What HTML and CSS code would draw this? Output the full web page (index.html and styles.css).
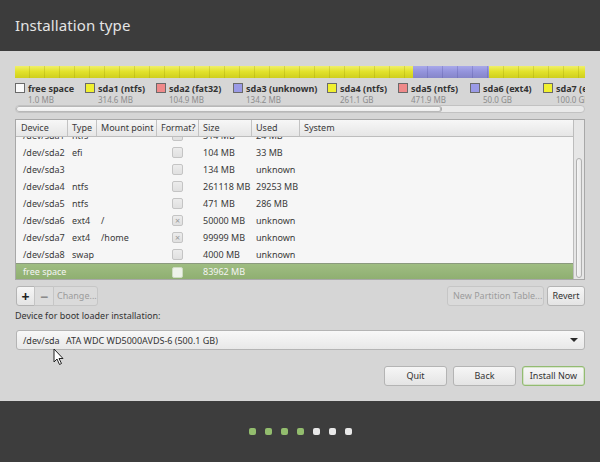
FILE: index.html
```html
<!DOCTYPE html>
<html>
<head>
<meta charset="utf-8">
<link rel="stylesheet" href="styles.css">
</head>
<body>
<div class="page">
  <header class="header"><h1 class="title">Installation type</h1></header>
  <main class="main">
    <div class="diskbar">
      <div class="seg seg-yellow" style="width:398px"></div>
      <div class="seg seg-blue" style="width:76px"></div>
      <div class="seg seg-yellow seg-fill"></div>
    </div>
    <div class="legend">
      <div class="leg"><span class="box box-free"></span><div class="leg-text"><div class="leg-name">free space</div><div class="leg-size">1.0 MB</div></div></div>
      <div class="leg"><span class="box box-yellow"></span><div class="leg-text"><div class="leg-name">sda1 (ntfs)</div><div class="leg-size">314.6 MB</div></div></div>
      <div class="leg"><span class="box box-red"></span><div class="leg-text"><div class="leg-name">sda2 (fat32)</div><div class="leg-size">104.9 MB</div></div></div>
      <div class="leg"><span class="box box-blue"></span><div class="leg-text"><div class="leg-name">sda3 (unknown)</div><div class="leg-size">134.2 MB</div></div></div>
      <div class="leg"><span class="box box-yellow"></span><div class="leg-text"><div class="leg-name">sda4 (ntfs)</div><div class="leg-size">261.1 GB</div></div></div>
      <div class="leg"><span class="box box-red"></span><div class="leg-text"><div class="leg-name">sda5 (ntfs)</div><div class="leg-size">471.9 MB</div></div></div>
      <div class="leg"><span class="box box-blue"></span><div class="leg-text"><div class="leg-name">sda6 (ext4)</div><div class="leg-size">50.0 GB</div></div></div>
      <div class="leg"><span class="box box-yellow"></span><div class="leg-text"><div class="leg-name">sda7 (ext4)</div><div class="leg-size">100.0 GB</div></div></div>
    </div>
    <div class="hscroll"><div class="hthumb"></div></div>

    <div class="table">
      <div class="table-main">
        <div class="thead">
          <div class="th">Device</div>
          <div class="th">Type</div>
          <div class="th">Mount point</div>
          <div class="th">Format?</div>
          <div class="th">Size</div>
          <div class="th">Used</div>
          <div class="th th-last">System</div>
        </div>
        <div class="tbody">
          <div class="rows">
            <div class="row"><div class="td td-dev">/dev/sda1</div><div class="td">ntfs</div><div class="td"></div><div class="td td-chk"><span class="chk"></span></div><div class="td">314 MB</div><div class="td">24 MB</div><div class="td"></div></div>
            <div class="row"><div class="td td-dev">/dev/sda2</div><div class="td">efi</div><div class="td"></div><div class="td td-chk"><span class="chk"></span></div><div class="td">104 MB</div><div class="td">33 MB</div><div class="td"></div></div>
            <div class="row"><div class="td td-dev">/dev/sda3</div><div class="td"></div><div class="td"></div><div class="td td-chk"><span class="chk"></span></div><div class="td">134 MB</div><div class="td">unknown</div><div class="td"></div></div>
            <div class="row"><div class="td td-dev">/dev/sda4</div><div class="td">ntfs</div><div class="td"></div><div class="td td-chk"><span class="chk"></span></div><div class="td">261118 MB</div><div class="td">29253 MB</div><div class="td"></div></div>
            <div class="row"><div class="td td-dev">/dev/sda5</div><div class="td">ntfs</div><div class="td"></div><div class="td td-chk"><span class="chk"></span></div><div class="td">471 MB</div><div class="td">286 MB</div><div class="td"></div></div>
            <div class="row"><div class="td td-dev">/dev/sda6</div><div class="td">ext4</div><div class="td">/</div><div class="td td-chk"><span class="chk chk-on">×</span></div><div class="td">50000 MB</div><div class="td">unknown</div><div class="td"></div></div>
            <div class="row"><div class="td td-dev">/dev/sda7</div><div class="td">ext4</div><div class="td">/home</div><div class="td td-chk"><span class="chk chk-on">×</span></div><div class="td">99999 MB</div><div class="td">unknown</div><div class="td"></div></div>
            <div class="row"><div class="td td-dev">/dev/sda8</div><div class="td">swap</div><div class="td"></div><div class="td td-chk"><span class="chk"></span></div><div class="td">4000 MB</div><div class="td">unknown</div><div class="td"></div></div>
            <div class="row row-sel"><div class="td td-dev">free space</div><div class="td"></div><div class="td"></div><div class="td td-chk"><span class="chk chk-sel"></span></div><div class="td">83962 MB</div><div class="td"></div><div class="td"></div></div>
          </div>
        </div>
      </div>
      <div class="vscroll"><div class="vthumb"></div></div>
    </div>

    <div class="toolbar">
      <div class="btn-group">
        <button class="btn btn-icon">+</button>
        <button class="btn btn-icon btn-minus">−</button>
        <button class="btn btn-disabled btn-change">Change...</button>
      </div>
      <div class="spacer"></div>
      <button class="btn btn-disabled btn-newtable">New Partition Table...</button>
      <button class="btn btn-revert">Revert</button>
    </div>

    <div class="boot-label">Device for boot loader installation:</div>
    <div class="combo">
      <span class="combo-dev">/dev/sda</span><span class="combo-name">ATA WDC WD5000AVDS-6 (500.1 GB)</span>
      <span class="combo-arrow"></span>
    </div>

    <div class="actions">
      <button class="btn btn-action">Quit</button>
      <button class="btn btn-action">Back</button>
      <button class="btn btn-action btn-default">Install Now</button>
    </div>
  </main>
  <footer class="footer">
    <span class="dot dot-done"></span>
    <span class="dot dot-done"></span>
    <span class="dot dot-done"></span>
    <span class="dot dot-done"></span>
    <span class="dot"></span>
    <span class="dot"></span>
    <span class="dot"></span>
  </footer>
  <svg class="cursor" width="12" height="18" viewBox="0 0 12 18">
    <path d="M1 1 L1 14 L4 11 L6.5 16.5 L8.5 15.5 L6 10.5 L10 10.5 Z" fill="#ffffff" stroke="#222" stroke-width="1" stroke-linejoin="round"/>
  </svg>
</div>
</body>
</html>
```

FILE: styles.css
```css
* { box-sizing: border-box; }
html, body { margin: 0; padding: 0; }
body {
  width: 600px;
  height: 462px;
  overflow: hidden;
  font-family: "Noto Sans", "DejaVu Sans", sans-serif;
  font-size: 9px;
  color: #3a3a3a;
  background: #d6d6d6;
}
.page {
  position: relative;
  width: 600px;
  height: 462px;
  display: flex;
  flex-direction: column;
}
.header {
  height: 51px;
  background: #3c3c3c;
  display: flex;
  align-items: center;
  padding-left: 15px;
  padding-bottom: 2px;
}
.title {
  margin: 0;
  font-size: 15px;
  font-weight: normal;
  color: #e4e4e4;
  letter-spacing: 0.1px;
}
.main {
  height: 350px;
  padding: 15px 15px 0 15px;
  display: flex;
  flex-direction: column;
}
.diskbar {
  height: 12px;
  display: flex;
  overflow: hidden;
}
.seg { height: 12px; flex: none; }
.seg-fill { flex: 1; }
.seg-yellow {
  background:
    repeating-linear-gradient(90deg, transparent 0 14px, rgba(150,150,0,0.28) 14px 15px),
    linear-gradient(#f0f06a, #e2e22c 45%, #cfcf1e);
}
.seg-blue {
  background:
    repeating-linear-gradient(90deg, transparent 0 14px, rgba(70,70,150,0.25) 14px 15px),
    linear-gradient(#a9a9ea, #9494dc 45%, #8585c9);
}
.legend {
  margin-top: 5px;
  height: 22px;
  display: grid;
  grid-template-columns: 70px 71px 77px 94px 71px 72px 73px 60px;
  overflow: hidden;
  white-space: nowrap;
}
.leg { display: flex; gap: 3px; min-width: 0; }
.box {
  width: 10px;
  height: 10px;
  border: 1px solid #6a6a6a;
  flex: none;
}
.box-free { background: #fafafa; }
.box-yellow { background: #f0f030; }
.box-red { background: #ef8a8a; }
.box-blue { background: #9a9ae6; }
.leg-name {
  font-weight: bold;
  color: #333;
  line-height: 11px;
  font-size: 9px;
}
.leg-size {
  color: #8c8c8c;
  font-size: 8px;
  line-height: 11px;
}
.hscroll {
  height: 8px;
  border: 1px solid #c2c2c2;
  border-radius: 4px;
  background: #e9e9e9;
  display: flex;
}
.hthumb {
  width: 426px;
  height: 6px;
  border-radius: 3px;
  background: linear-gradient(#fafafa, #ececec);
  border-right: 1px solid #a8a8a8;
  box-shadow: inset 0 0 0 1px #b8b8b8;
}
.table {
  margin-top: 6px;
  height: 161px;
  border: 1px solid #a8a8a8;
  display: flex;
  background: #f6f6f6;
}
.table-main {
  flex: 1;
  display: flex;
  flex-direction: column;
  min-width: 0;
}
.thead, .row {
  display: grid;
  grid-template-columns: 52px 29px 60px 42px 53px 48px 1fr;
}
.thead {
  height: 17px;
  position: relative;
  z-index: 1;
  background: linear-gradient(#f7f7f7, #e6e6e6);
  border-bottom: 1px solid #bdbdbd;
}
.th {
  border-right: 1px solid #c3c3c3;
  padding-left: 4px;
  line-height: 16px;
  color: #3a3a3a;
  white-space: nowrap;
  overflow: hidden;
}
.th:first-child { padding-left: 5px; }
.th-last { border-right: none; }
.tbody {
  flex: 1;
  overflow: hidden;
}
.rows { margin-top: -10px; }
.row {
  height: 17px;
  line-height: 17px;
}
.td {
  padding-left: 4px;
  white-space: nowrap;
  overflow: hidden;
  color: #3a3a3a;
}
.td-dev { padding-left: 7px; }
.td-chk {
  display: flex;
  align-items: center;
  padding-left: 15px;
}
.chk {
  width: 11px;
  height: 11px;
  border: 1px solid #c4c4c4;
  border-radius: 2px;
  background: linear-gradient(#ececec, #e0e0e0);
  display: flex;
  align-items: center;
  justify-content: center;
  font-size: 9px;
  line-height: 9px;
  color: #9a9a9a;
}
.chk-sel {
  border-color: #cfdcc3;
  background: #eef2ea;
}
.row-sel {
  background: linear-gradient(#9fbd82, #8eae70);
  border-top: 1px solid #8b9a7e;
  height: 17px;
  line-height: 16px;
}
.row-sel .td { color: #f4f4f4; }
.vscroll {
  width: 11px;
  border-left: 1px solid #bdbdbd;
  background: #e6e6e6;
  padding: 38px 2px 1px 2px;
}
.vthumb {
  height: 120px;
  border: 1px solid #b0b0b0;
  border-radius: 3px;
  background: linear-gradient(90deg, #f6f6f6, #e8e8e8);
}
.toolbar {
  margin-top: 6px;
  height: 20px;
  display: flex;
  align-items: stretch;
}
.spacer { flex: 1; }
.btn {
  font-family: inherit;
  font-size: 9px;
  color: #333;
  border: 1px solid #b4b4b4;
  border-radius: 3px;
  background: linear-gradient(#f6f6f6, #e4e4e4);
  padding: 0 5px;
  margin: 0;
  height: 20px;
  line-height: 18px;
  white-space: nowrap;
}
.btn-group {
  display: flex;
  margin-left: 1px;
}
.btn-group .btn { border-radius: 0; margin-left: -1px; }
.btn-group .btn:first-child { border-radius: 3px 0 0 3px; margin-left: 0; }
.btn-group .btn:last-child { border-radius: 0 3px 3px 0; }
.btn-icon {
  width: 19px;
  padding: 0;
  font-size: 14px;
  font-weight: bold;
  color: #222;
  line-height: 17px;
}
.btn-minus {
  width: 20px;
  color: #8a8a8a;
  background: #dcdcdc;
  border-color: #c4c4c4;
}
.btn-disabled {
  color: #9c9c9c;
  background: #dadada;
  border-color: #c6c6c6;
}
.btn-change { width: 45px; padding: 0 3px; }
.btn-newtable { width: 97px; }
.btn-revert { width: 38px; margin-left: 3px; padding: 0; }
.boot-label {
  margin-top: 3px;
  height: 14px;
  line-height: 14px;
  color: #333;
}
.combo {
  margin-top: 7px;
  margin-left: 1px;
  height: 20px;
  border: 1px solid #b4b4b4;
  border-radius: 3px;
  background: linear-gradient(#f8f8f8, #e8e8e8);
  display: flex;
  align-items: center;
  padding-left: 6px;
  padding-right: 6px;
}
.combo-dev { width: 43px; color: #333; }
.combo-name { flex: 1; color: #333; }
.combo-arrow {
  width: 0;
  height: 0;
  border-left: 4px solid transparent;
  border-right: 4px solid transparent;
  border-top: 4px solid #2a2a2a;
}
.actions {
  margin-top: 16px;
  display: flex;
  justify-content: flex-end;
  gap: 6px;
}
.btn-action { width: 63px; height: 20px; line-height: 18px; padding: 0; }
.btn-default {
  border-color: #93bb72;
  background: linear-gradient(#f7f7f7, #e7e7e7);
  box-shadow: inset 0 0 0 0.5px #b9d6a0;
}
.footer {
  flex: 1;
  background: #3d3d3d;
  display: flex;
  justify-content: center;
  align-items: center;
  gap: 9px;
  padding-left: 1px;
}
.dot {
  width: 7px;
  height: 7px;
  border-radius: 2px;
  background: #e8e8e8;
}
.dot-done { background: #93bd6e; }
.cursor {
  position: absolute;
  left: 53px;
  top: 348px;
}
```
